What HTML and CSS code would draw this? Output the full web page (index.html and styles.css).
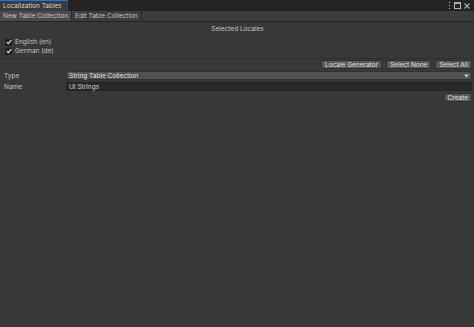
FILE: index.html
```html
<!DOCTYPE html>
<html>
<head>
<meta charset="utf-8">
<link rel="stylesheet" href="styles.css">
</head>
<body>
<div class="window">
  <div class="titlebar">
    <div class="wintab">Localization Tables</div>
    <div class="winicons">
      <svg width="3" height="7" viewBox="0 0 3 7"><rect x="1" y="0" width="1" height="1" fill="#b0b0b0"/><rect x="1" y="3" width="1" height="1" fill="#b0b0b0"/><rect x="1" y="6" width="1" height="1" fill="#b0b0b0"/></svg>
      <svg width="7" height="7" viewBox="0 0 7 7"><rect x="0.5" y="0.5" width="6" height="6" fill="none" stroke="#b0b0b0"/><rect x="0" y="0" width="7" height="2" fill="#b0b0b0"/></svg>
      <svg width="6" height="6" viewBox="0 0 6 6"><path d="M0.5 0.5 L5.5 5.5 M5.5 0.5 L0.5 5.5" stroke="#b0b0b0" stroke-width="1.1"/></svg>
    </div>
  </div>
  <div class="toolbar">
    <div class="tbtab active">New Table Collection</div>
    <div class="tbtab">Edit Table Collection</div>
  </div>
  <div class="content">
    <div class="heading">Selected Locales</div>
    <div class="locales">
      <div class="locale"><span class="check"><svg width="6" height="6" viewBox="0 0 6 6"><path d="M0.8 3.2 L2.3 4.7 L5.2 1.2" stroke="#e0e0e0" stroke-width="1.2" fill="none"/></svg></span>English (en)</div>
      <div class="locale"><span class="check"><svg width="6" height="6" viewBox="0 0 6 6"><path d="M0.8 3.2 L2.3 4.7 L5.2 1.2" stroke="#e0e0e0" stroke-width="1.2" fill="none"/></svg></span>German (de)</div>
    </div>
    <div class="btnrow">
      <div class="btn">Locale Generator</div>
      <div class="btn">Select None</div>
      <div class="btn">Select All</div>
    </div>
    <div class="field">
      <div class="label">Type</div>
      <div class="dropdown"><span>String Table Collection</span><svg width="5" height="4" viewBox="0 0 5 4"><path d="M0 0.5 L5 0.5 L2.5 3.5 Z" fill="#c4c4c4"/></svg></div>
    </div>
    <div class="field">
      <div class="label">Name</div>
      <div class="textinput">UI Strings</div>
    </div>
    <div class="createrow">
      <div class="btn">Create</div>
    </div>
  </div>
</div>
</body>
</html>
```
FILE: styles.css
```css
* { box-sizing: border-box; }
html, body { margin: 0; padding: 0; }
body {
  width: 474px;
  height: 327px;
  background: #383838;
  font-family: Inter, "Noto Sans", sans-serif;
  font-size: 6.5px;
  color: #c4c4c4;
  overflow: hidden;
  white-space: nowrap;
}
.window { display: flex; flex-direction: column; height: 100%; }
.titlebar {
  height: 11px;
  background: #232323;
  display: flex;
  justify-content: space-between;
  align-items: stretch;
}
.wintab {
  background: #3a3a3a;
  border-top: 1px solid #3a72b0;
  border-right: 1px solid #2d4a6a;
  padding: 0 4px 0 3px;
  display: flex;
  align-items: center;
  width: 68px;
  color: #d2d2d2;
}
.winicons {
  display: flex;
  align-items: center;
  gap: 3px;
  padding-right: 4px;
}
.toolbar {
  height: 11px;
  background: #3c3c3c;
  border-bottom: 1px solid #232323;
  display: flex;
}
.tbtab {
  padding: 0 3px;
  display: flex;
  align-items: center;
  color: #c4c4c4;
  border-right: 1px solid #2a2a2a;
}
.tbtab.active { background: #4a4a4a; }
.content { padding: 0 2px 0 3px; display: flex; flex-direction: column; }
.heading { text-align: center; padding-top: 2px; height: 12px; line-height: 10px; }
.locales { display: flex; flex-direction: column; gap: 1px; padding-top: 4px; padding-left: 2px; }
.locale { display: flex; align-items: center; gap: 3px; height: 8px; color: #c4c4c4; }
.check {
  width: 7px; height: 7px;
  background: #202020;
  border-radius: 1px;
  display: flex; align-items: center; justify-content: center;
}
.btnrow {
  display: flex;
  justify-content: flex-end;
  gap: 4px;
  margin-top: 3px;
  padding-top: 1px;
  border-top: 1px solid #2e2e2e;
  margin-left: -3px;
  margin-right: -2px;
  padding-right: 2px;
}
.btn {
  background: #585858;
  border: 1px solid #303030;
  border-radius: 2px;
  height: 9px;
  padding: 0 3px;
  display: flex;
  align-items: center;
  color: #e0e0e0;
}
.field { display: flex; align-items: center; margin-top: 2px; height: 9px; }
.label { width: 63px; padding-left: 1px; }
.dropdown {
  flex: 1;
  height: 9px;
  background: #515151;
  border: 1px solid #303030;
  border-radius: 2px;
  display: flex;
  justify-content: space-between;
  align-items: center;
  padding: 0 2px 0 2px;
  color: #e0e0e0;
}
.textinput {
  flex: 1;
  height: 9px;
  background: #2a2a2a;
  border: 1px solid #212121;
  border-radius: 2px;
  display: flex;
  align-items: center;
  padding: 0 2px;
  color: #d2d2d2;
}
.createrow { display: flex; justify-content: flex-end; margin-top: 2px; }
```
